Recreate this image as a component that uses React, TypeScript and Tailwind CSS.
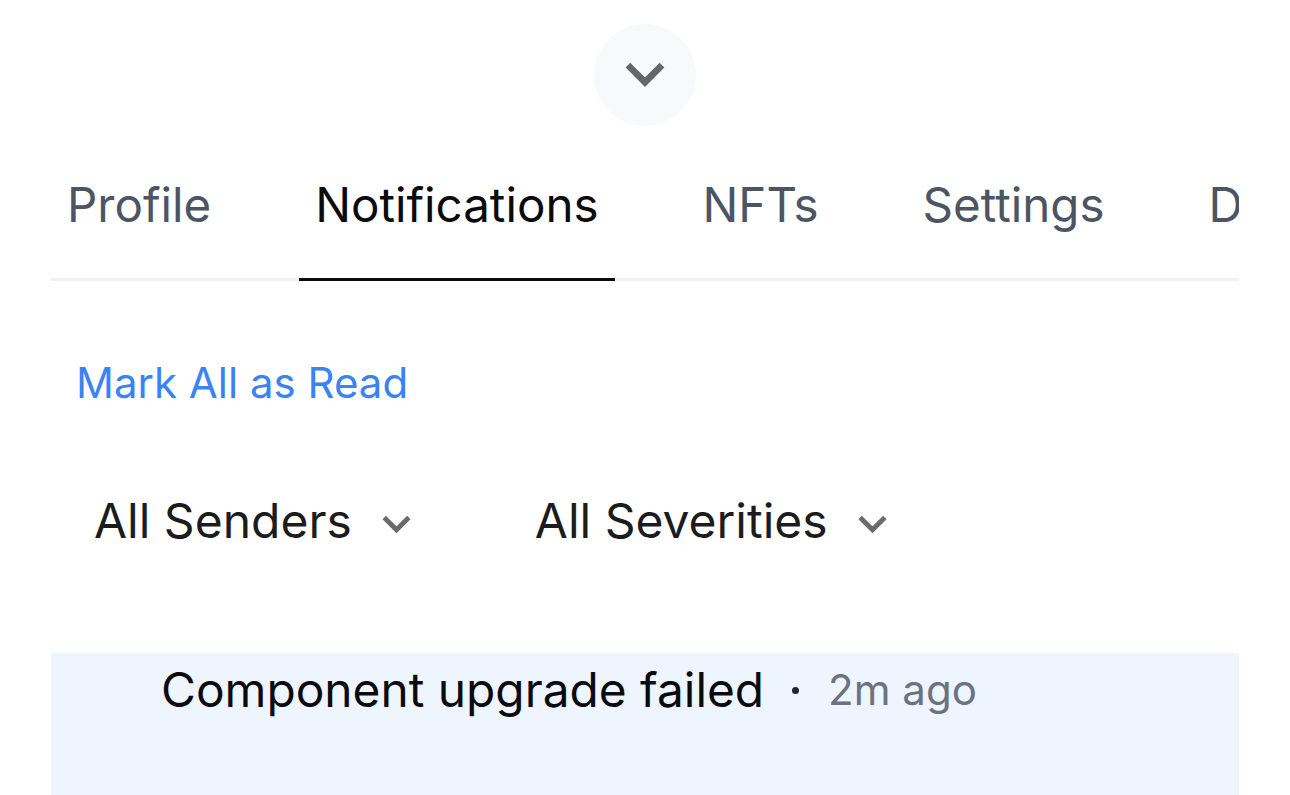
import React from 'react';

const tabs = ['Profile', 'Notifications', 'NFTs', 'Settings', 'Developer'];

function Chevron({ className, stroke = 5 }: { className?: string; stroke?: number }) {
  return (
    <svg viewBox="0 0 30 20" fill="none" stroke="currentColor" strokeWidth={stroke} strokeLinecap="square" className={className}>
      <path d="M4 4l11 11 11-11" />
    </svg>
  );
}

export default function App() {
  return (
    <div className="w-[1290px] h-[795px] overflow-hidden bg-white font-['Inter',sans-serif]">
      {/* Collapse handle */}
      <div className="flex justify-center pt-[24px]">
        <button className="w-[102px] h-[102px] rounded-full bg-[#f8f9fa] flex items-center justify-center text-[#666666]">
          <Chevron className="w-[40px] h-[27px]" stroke={5} />
        </button>
      </div>

      <div className="mx-[51px] w-[1188px]">
        {/* Tabs */}
        <div className="mt-[50px] overflow-hidden shadow-[inset_0_-3px_0_#f1f1f2]">
          <div className="flex gap-[72px] whitespace-nowrap">
            {tabs.map((t) => (
              <div
                key={t}
                className={
                  'px-[16px] pb-[44px] text-[47.5px] leading-[58px] border-b-[3px] ' +
                  (t === 'Notifications' ? 'text-[#0a0a0f] border-[#0a0a0f]' : 'text-[#4b5563] border-transparent')
                }
              >
                {t}
              </div>
            ))}
          </div>
        </div>

        {/* Mark all */}
        <div className="mt-[77px] pl-[25px]">
          <button className="text-[42px] leading-[50px] text-[#3b82f6]">Mark All as Read</button>
        </div>

        {/* Filters */}
        <div className="mt-[84px] pl-[43px] flex items-center gap-[124px]">
          <div className="flex items-center gap-[30px] text-[48px] leading-[58px] text-[#1c1c1e]">
            <span>All Senders</span>
            <Chevron className="w-[29px] h-[20px] text-[#6b6b6b] mt-[8px]" stroke={5} />
          </div>
          <div className="flex items-center gap-[30px] text-[48px] leading-[58px] text-[#1c1c1e]">
            <span>All Severities</span>
            <Chevron className="w-[29px] h-[20px] text-[#6b6b6b] mt-[8px]" stroke={5} />
          </div>
        </div>

        {/* Notification row */}
        <div className="mt-[103px] h-[200px] bg-[#eef5ff] pl-[110px] pt-[8px]">
          <div className="flex items-center whitespace-nowrap">
            <span className="text-[47.8px] leading-[58px] text-[#0a0a0f]">Component upgrade failed</span>
            <span className="ml-[28px] mr-[29px] w-[7px] h-[7px] rounded-full bg-[#1f2430]" />
            <span className="text-[42px] leading-[58px] text-[#6b7280]">2m ago</span>
          </div>
        </div>
      </div>
    </div>
  );
}
